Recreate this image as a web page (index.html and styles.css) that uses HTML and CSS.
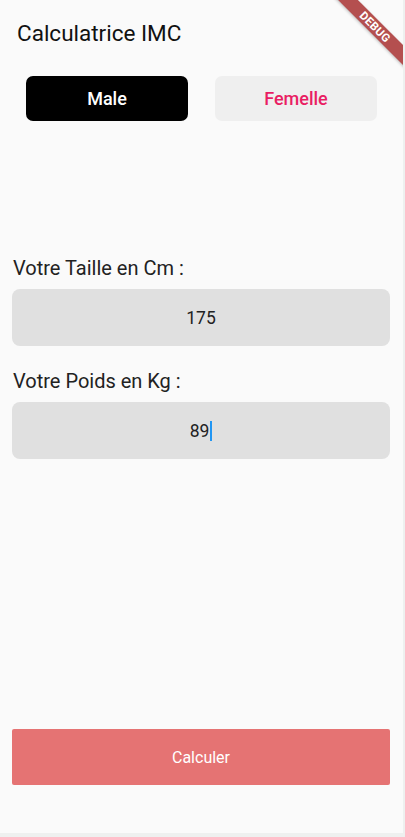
FILE: index.html
```html
<!DOCTYPE html>
<html lang="fr">
<head>
<meta charset="utf-8">
<title>Calculatrice IMC</title>
<link rel="stylesheet" href="styles.css">
</head>
<body>
<div class="app">
  <header class="title">Calculatrice IMC</header>
  <div class="gender">
    <button class="gbtn gbtn-active">Male</button>
    <button class="gbtn gbtn-idle">Femelle</button>
  </div>
  <div class="form">
    <label class="label">Votre Taille en Cm :</label>
    <div class="field"><span class="value">175</span></div>
    <label class="label">Votre Poids en Kg :</label>
    <div class="field"><span class="value">89<span class="caret"></span></span></div>
  </div>
  <div class="spacer"></div>
  <button class="calc">Calculer</button>
  <div class="banner">DEBUG</div>
</div>
</body>
</html>
```
FILE: styles.css
```css
html, body {
  margin: 0;
  padding: 0;
  background: #eef0ef;
}
.app {
  position: relative;
  width: 403px;
  height: 833px;
  background: #fafafa;
  overflow: hidden;
  display: flex;
  flex-direction: column;
  font-family: Roboto, "Noto Sans", sans-serif;
  box-sizing: border-box;
}
.title {
  padding: 19px 0 0 17px;
  height: 46px;
  box-sizing: border-box;
  font-size: 22.5px;
  line-height: 28px;
  color: #111;
}
.gender {
  display: flex;
  gap: 27px;
  padding: 0 0 0 26px;
  margin-top: 30px;
}
.gbtn {
  width: 162px;
  height: 45px;
  border: none;
  border-radius: 7px;
  font-family: Roboto, "Noto Sans", sans-serif;
  font-size: 18px;
  font-weight: 500;
  padding: 0;
}
.gbtn-active {
  background: #000;
  color: #fff;
}
.gbtn-idle {
  background: #efefef;
  color: #e91e63;
}
.form {
  display: flex;
  flex-direction: column;
  padding: 0 13px 0 12px;
  margin-top: 135px;
}
.label {
  font-size: 20px;
  line-height: 24px;
  color: #222;
  padding-left: 1px;
  margin-bottom: 9px;
}
.field {
  height: 57px;
  background: #e0e0e0;
  border-radius: 8px;
  display: flex;
  align-items: center;
  justify-content: center;
  margin-bottom: 23px;
}
.value {
  font-size: 17.5px;
  color: #222;
  position: relative;
  padding-top: 1px;
}
.caret {
  display: inline-block;
  width: 2px;
  height: 20px;
  background: #2196f3;
  vertical-align: -4px;
  margin-left: 1px;
}
.spacer {
  flex: 1;
}
.calc {
  margin: 0 13px 48px 12px;
  height: 56px;
  border: none;
  border-radius: 2px;
  background: #e57373;
  color: #fff;
  font-family: Roboto, "Noto Sans", sans-serif;
  font-size: 16px;
  padding: 0;
}
.banner {
  position: absolute;
  left: 313px;
  top: 20px;
  width: 124px;
  height: 14px;
  line-height: 14px;
  background: #b44f4f;
  color: #fff;
  font-size: 11.5px;
  font-weight: 700;
  text-align: center;
  letter-spacing: 0.3px;
  transform: rotate(45deg);
  box-shadow: 0 1px 3px rgba(0,0,0,0.25);
}
```
